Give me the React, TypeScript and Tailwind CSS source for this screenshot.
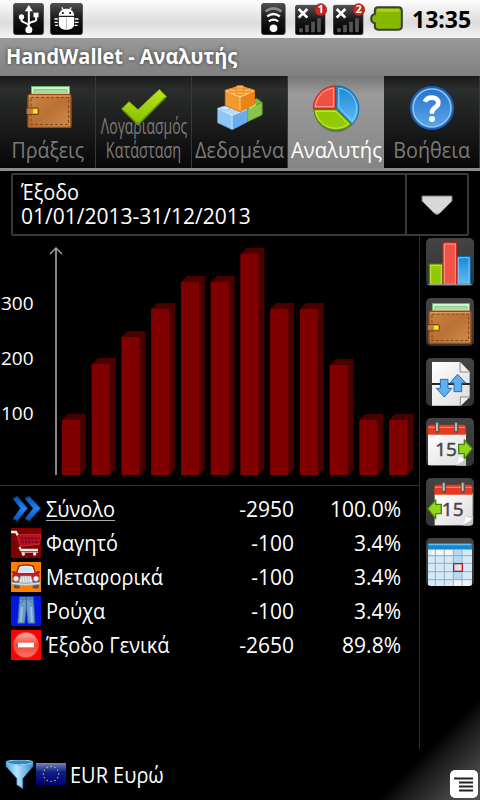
import type { ReactNode } from "react";

const months = [55, 111, 138, 166, 193, 193, 221, 166, 166, 110, 55, 55];

function Wallet({ className }: { className?: string }) {
  return (
    <svg viewBox="0 0 46 42" className={className}>
      <rect x="5.5" y="0.5" width="38" height="14" fill="#d5f3cd" stroke="#63b56a" />
      <path d="M8 7V3.5H41V7" fill="#a5dba0" stroke="#86c98a" />
      <rect x="2" y="8.5" width="43" height="33" rx="1.5" fill="url(#leather)" stroke="#9a4a17" strokeWidth="1.4" />
      <rect x="5" y="11.5" width="37.5" height="27" fill="none" stroke="#85491d" strokeWidth="1.1" strokeDasharray="3 2" />
      <path d="M3 10h41" stroke="#e3a768" strokeWidth="1" />
      <rect x="0.6" y="22" width="12" height="6.5" rx="1.5" fill="#c27e42" stroke="#7c3b12" />
      <rect x="7" y="23" width="4.5" height="4.5" fill="#ffed16" stroke="#d6a500" strokeWidth=".6" />
    </svg>
  );
}

function Check() {
  return (
    <svg viewBox="0 0 46 38" className="h-[38px] w-[46px]">
      <path d="M.7 20 8 12.7l9 8L38.3.5l7.2 7.2L17 36.3Z" fill="url(#lime)" stroke="#8fb512" strokeWidth=".8" strokeLinejoin="round" />
      <path d="m1.5 20.5 15.5 15L44.8 8" fill="none" stroke="#5c9300" strokeWidth="1.2" />
    </svg>
  );
}

function Bricks() {
  return (
    <svg viewBox="82 26 138 136" className="h-[45px] w-[46px]">
      <path d="m152 88 50-22 16 12v38l-46 22-20-10Z" fill="#79b83d" />
      <path d="m172 100 46-22v38l-46 22Z" fill="#8ac44c" stroke="#4f9124" strokeWidth="2" />
      <path d="m178 96 20-12" stroke="#b8e07f" strokeWidth="8" />
      <path d="m83 96 44-12 45 16v38l-45 23-44-21Z" fill="#8fc6f5" stroke="#4c8fd0" strokeWidth="2" />
      <path d="m83 96 44 22 45-18-45-16Z" fill="#b9dcfa" />
      <path d="m127 118 45-18v38l-45 23Z" fill="#68aeec" />
      <path d="M127 118v41M85 97l42 21 44-18" stroke="#e0f1ff" strokeWidth="2.5" fill="none" />
      <ellipse cx="106" cy="96" rx="14" ry="6" fill="#d6ebfd" stroke="#69a7e0" strokeWidth="2" />
      <path d="m106 42 45-14 44 14v42l-44 23-45-19Z" fill="#f29a2e" stroke="#c9620b" strokeWidth="2" />
      <path d="m106 42 45 21 44-21-44-14Z" fill="#ffbf65" />
      <path d="m151 63 44-21v42l-44 23Z" fill="#eb8318" />
      <path d="M151 63v41M108 43l43 20 43-20" stroke="#ffd9a0" strokeWidth="2.5" fill="none" />
      <g fill="#ffad43" stroke="#d2740e" strokeWidth="2">
        <ellipse cx="151" cy="33" rx="13" ry="6" />
        <ellipse cx="129" cy="42" rx="13" ry="6" />
        <ellipse cx="173" cy="42" rx="13" ry="6" />
        <ellipse cx="151" cy="51" rx="13" ry="6" />
      </g>
    </svg>
  );
}

function Pie() {
  return (
    <svg viewBox="368 24 142 144" className="h-[48px] w-[47px]">
      <ellipse cx="438" cy="100" rx="66" ry="66" fill="#333" opacity=".35" />
      <path d="M436 95V26a68 68 0 0 0-67 69Z" fill="#f05040" stroke="#c3261c" strokeWidth="3" />
      <path d="M430 89V33a62 62 0 0 0-55 56Z" fill="none" stroke="#ffa79d" strokeWidth="3" />
      <path d="M440 94V26a68 68 0 0 1 47 116Z" fill="url(#sky)" stroke="#116bab" strokeWidth="3" />
      <path d="M446 91V33a61 61 0 0 1 40 99Z" fill="none" stroke="#8ed0ff" strokeWidth="3" />
      <path d="M370 97h68l46 45a68 68 0 0 1-114-45Z" fill="#93c900" stroke="#4a8400" strokeWidth="3" />
      <path d="M376 103h60l39 38a62 62 0 0 1-99-38Z" fill="none" stroke="#c5ee51" strokeWidth="3" />
    </svg>
  );
}

function Help() {
  return (
    <svg viewBox="658 25 138 138" className="size-[46px]">
      <circle cx="727" cy="94" r="65" fill="#1d62b5" stroke="#1b59a8" strokeWidth="3" />
      <circle cx="727" cy="94" r="57" fill="url(#help)" stroke="#8fc3f5" strokeWidth="5" />
      <path d="M706 75c3-9 12-12 21-12 12 0 19 6 19 15 0 15-19 15-19 29v4" fill="none" stroke="#fff" strokeWidth="14" />
      <circle cx="727" cy="127" r="9" fill="#fff" />
    </svg>
  );
}

function Defs() {
  return (
    <svg className="absolute size-0">
      <defs>
        <linearGradient id="leather" x2="1" y2="1">
          <stop stopColor="#c98546" />
          <stop offset=".5" stopColor="#bb7133" />
          <stop offset="1" stopColor="#cd8e50" />
        </linearGradient>
        <linearGradient id="lime" x2="0" y2="1">
          <stop stopColor="#bfe51a" />
          <stop offset="1" stopColor="#82bd00" />
        </linearGradient>
        <linearGradient id="sky" x2="0" y2="1">
          <stop stopColor="#1587d3" />
          <stop offset="1" stopColor="#65bdf3" />
        </linearGradient>
        <linearGradient id="help" x2="0" y2="1">
          <stop stopColor="#2674ca" />
          <stop offset="1" stopColor="#5ba6ea" />
        </linearGradient>
        <linearGradient id="badge" x2="0" y2="1">
          <stop stopColor="#505050" />
          <stop offset=".5" stopColor="#161616" />
          <stop offset="1" stopColor="#000" />
        </linearGradient>
        <linearGradient id="redball" x2="0" y2="1">
          <stop stopColor="#ffb3a8" />
          <stop offset=".5" stopColor="#ed4638" />
          <stop offset="1" stopColor="#ff7465" />
        </linearGradient>
        <linearGradient id="chevron" x2="0" y2="1">
          <stop stopColor="#0b4cb0" />
          <stop offset=".5" stopColor="#2183ef" />
          <stop offset="1" stopColor="#0a4fb8" />
        </linearGradient>
        <linearGradient id="funnel">
          <stop stopColor="#4fa7e0" />
          <stop offset=".4" stopColor="#b8e4fb" />
          <stop offset="1" stopColor="#3a8fca" />
        </linearGradient>
        <linearGradient id="flag" x2="0" y2="1">
          <stop stopColor="#7a84bd" />
          <stop offset=".4" stopColor="#10208a" />
          <stop offset="1" stopColor="#000070" />
        </linearGradient>
        <linearGradient id="paper" x2="1" y2="1">
          <stop stopColor="#fff" />
          <stop offset="1" stopColor="#dcdcdc" />
        </linearGradient>
      </defs>
    </svg>
  );
}

function Signal({ sim }: { sim: string }) {
  return (
    <svg viewBox="165 8 96 96" className="h-8 w-8">
      <rect x="166" y="15" width="89" height="88" rx="6" fill="url(#badge)" stroke="#333" strokeWidth="2" />
      <path d="m176 26 26 26m0-26-26 26" stroke="#fff" strokeWidth="8" />
      <path d="M183 96v-12m18 12V74m18 22V64m18 32V54" stroke="#555" strokeWidth="11" />
      <circle cx="242" cy="28" r="18" fill="#c12b20" stroke="#8d1710" strokeWidth="2" />
      <text x="242" y="39" textAnchor="middle" fontSize="31" fontWeight="700" fill="#fff">{sim}</text>
    </svg>
  );
}

function StatusBar() {
  return (
    <header className="flex h-[38px] items-start bg-linear-to-b from-[#fdfdfd] via-[#dcdcdc] via-60% to-[#f4f4f4] pt-[3px] pl-[13px]">
      <svg viewBox="38 8 92 96" className="h-8 w-[31px]">
        <rect x="39" y="9" width="90" height="94" rx="8" fill="url(#badge)" stroke="#333" strokeWidth="2" />
        <path d="M85 88V24M63 50v10c0 8 22 6 22 18M107 44v14c0 8-22 5-22 14" fill="none" stroke="#fff" strokeWidth="6" />
        <path d="m73 33 12-19 12 19Z" fill="#fff" />
        <circle cx="63" cy="50" r="8" fill="#fff" />
        <path d="M99 37h15v14H99Z" fill="#fff" />
        <circle cx="85" cy="88" r="10.500" fill="#fff" />
      </svg>
      <svg viewBox="149 8 98 96" className="ml-1.5 h-8 w-[33px]">
        <rect x="150" y="9" width="96" height="94" rx="8" fill="url(#badge)" stroke="#333" strokeWidth="2" />
        <path d="M175 46c0-28 46-28 46 0ZM175 50h46v22c0 22-46 22-46 0Z" fill="#fff" />
        <path d="m184 21 5 9m23-9-5 9M162 56h10m-10 10h10m-8 9h9m50-19h11m-11 10h11m-12 9h9" stroke="#fff" strokeWidth="4" />
        <path d="M198 52v34" stroke="#bbb" strokeWidth="3" />
        <path d="M187 35v6m22-6v6" stroke="#222" strokeWidth="5" />
      </svg>
      <svg viewBox="62 8 74 96" className="ml-[178px] h-8 w-[25px]">
        <rect x="63" y="9" width="71" height="94" rx="8" fill="url(#badge)" stroke="#333" strokeWidth="2" />
        <circle cx="99" cy="84" r="11.500" fill="#fff" />
        <path d="M85 63q14-10 28 0M80 48q19-14 38 0" fill="none" stroke="#fff" strokeWidth="7" />
        <path d="M75 33q24-18 48 0" fill="none" stroke="#8a8a8a" strokeWidth="8" />
      </svg>
      <div className="ml-[9px] flex gap-[6px]">
        <Signal sim="1" />
        <Signal sim="2" />
      </div>
      <svg viewBox="392 18 98 75" className="mt-[3px] ml-[5px] h-[25px] w-[33px]">
        <path d="M416 22h61q10 0 10 10v46q0 11-10 11h-61q-10 0-10-11v-8q-11-3-11-14t11-14v-10q0-10 10-10Z" fill="#86b800" stroke="#3c3c3c" strokeWidth="6" />
        <path d="M414 31h66" stroke="#a6d51b" strokeWidth="8" />
      </svg>
      <span className="ml-[9px] text-[23px] leading-[33px] font-bold text-black">13:35</span>
    </header>
  );
}

type TabProps = { icon: ReactNode; active?: boolean; children: ReactNode };

function Tab({ icon, active, children }: TabProps) {
  return (
    <button
      className={
        active
          ? "grid h-[92px] w-24 grid-cols-[96px] bg-linear-to-b from-[#777] via-[#9b9b9b] via-20% to-[#858585] text-white"
          : "grid h-[92px] w-24 grid-cols-[96px] border-r border-[#383838] bg-linear-to-b from-[#191919] via-[#2c2e2d] via-15% to-[#080808] text-[#7b7b7b]"
      }
    >
      <span className="flex justify-center pt-[9px] [grid-area:1/1]">{icon}</span>
      <span className="flex flex-col items-center justify-end pb-[7px] text-[22px] leading-6 whitespace-nowrap [grid-area:1/1]">
        {children}
      </span>
    </button>
  );
}

function Tabs() {
  return (
    <nav className="flex h-[95px] border-b-[3px] border-[#8a8d8a] bg-[#8a8d8a]">
      <Tab icon={<Wallet className="mt-px ml-0.5 h-[42px] w-[46px]" />}>
        <span className="scale-x-[.89]">Πράξεις</span>
      </Tab>
      <Tab icon={<span className="mt-1"><Check /></span>}>
        <span className="scale-x-[.635]">Λογαριασμός</span>
        <span className="scale-x-[.655]">Κατάσταση</span>
      </Tab>
      <Tab icon={<Bricks />}>
        <span className="scale-x-90">Δεδομένα</span>
      </Tab>
      <Tab icon={<Pie />} active>
        <span className="scale-x-[.92]">Αναλυτής</span>
      </Tab>
      <Tab icon={<Help />}>
        <span className="scale-x-90">Βοήθεια</span>
      </Tab>
    </nav>
  );
}

function Chart() {
  return (
    <svg viewBox="0 236 419 249" className="h-[249px] w-[419px]">
      <g fill="#fff" fontSize="19">
        <text x="1" y="310">300</text>
        <text x="1" y="365">200</text>
        <text x="1" y="420">100</text>
      </g>
      <path d="M56 475V249" stroke="#888" strokeWidth="2" />
      <path d="m50 254 6-6 6 6" fill="none" stroke="#aaa" strokeWidth="1.3" />
      {months.map((h, i) => {
        const x = 62 + i * 29.75;
        const y = 475 - h;
        return (
          <g key={i}>
            <path d={`M${x} ${y}l6-6h17.800V469l-5.800 6H${x}Z`} fill="#4b0000" />
            <rect x={x} y={y} width="18" height={h} fill="#800000" />
          </g>
        );
      })}
    </svg>
  );
}

function Cart() {
  return (
    <svg viewBox="33 129 90 90" className="size-[30px]">
      <path d="M33 129h90v90H33Z" fill="#800000" />
      <path d="M50 149h72l-4 29-57 6Z" fill="#b01020" stroke="#c82b35" strokeWidth="3" />
      <path d="M64 160h56M66 171h53" stroke="#68000a" strokeWidth="4" strokeDasharray="5 5" />
      <path d="M33 141h15l5 10M58 186l5 9h51" fill="none" stroke="#eee" strokeWidth="7" />
      <path d="M63 202h52" stroke="#d3b4b4" strokeWidth="3" />
      <circle cx="70" cy="207" r="5" fill="#eee" />
      <circle cx="104" cy="207" r="5" fill="#eee" />
    </svg>
  );
}

function Car() {
  return (
    <svg viewBox="33 231 90 90" className="size-[30px]">
      <path d="M33 231h90v90H33Z" fill="#ff8000" />
      <path d="M42 296h18v12q-9 5-18 0Zm56 0h18v12q-9 5-18 0Z" fill="#555" />
      <path d="m50 261 6-19q22-6 44 0l6 19 11 9v24H39v-24Z" fill="#c31c22" stroke="#7b1014" strokeWidth="2" />
      <path d="m54 262 6-16q18-5 36 0l6 16Z" fill="#c5e7f8" stroke="#fff" strokeWidth="3" />
      <path d="M37 262h9m64 0h9" stroke="#9d1014" strokeWidth="7" />
      <path d="M62 273h31l6 21H56Z" fill="#e8eef1" stroke="#8999a4" strokeWidth="2" />
      <path d="M67 275v17m7-17v17m7-17v17m7-17v17" stroke="#9daab2" strokeWidth="2" />
      <circle cx="48" cy="281" r="8" fill="#f1f5f8" stroke="#999" strokeWidth="2" />
      <circle cx="108" cy="281" r="8" fill="#f1f5f8" stroke="#999" strokeWidth="2" />
      <path d="M35 291q43 8 86 0v7q-43 8-86 0Z" fill="#d7e0e4" stroke="#8c9ba0" strokeWidth="2" />
    </svg>
  );
}

function Jeans() {
  return (
    <svg viewBox="33 333 90 90" className="size-[30px]">
      <path d="M33 333h90v90H33Z" fill="#0018de" />
      <path d="M59 336h41l5 79H84l-5-48-5 48H53Z" fill="#6d9bc7" stroke="#34608e" strokeWidth="2" />
      <path d="M59 342h42M79 336v31" stroke="#34608e" strokeWidth="3" />
      <path d="m66 366-4 45m31-45 3 45" stroke="#97c0e2" strokeWidth="6" />
      <path d="m60 355 11-9m29 9-12-9" stroke="#34608e" strokeWidth="2" />
    </svg>
  );
}

function Expense() {
  return (
    <svg viewBox="33 435 90 90" className="size-[30px]">
      <path d="M33 435h90v90H33Z" fill="red" />
      <circle cx="78" cy="480" r="38" fill="url(#redball)" stroke="#d8382c" strokeWidth="2" />
      <rect x="54" y="473" width="48" height="14" fill="#fff" />
    </svg>
  );
}

function Arrows() {
  return (
    <svg viewBox="33 24 90 90" className="size-[30px]">
      <path d="m39 38 13-7 31 36-31 38-13-7 22-31Zm36 0 13-7 34 36-34 38-13-7 24-31Z" fill="url(#chevron)" stroke="#0a3f91" strokeWidth="2" />
    </svg>
  );
}

const rows = [
  { icon: <Arrows />, name: "Σύνολο", amount: "-2950", share: "100.0%", total: true },
  { icon: <Cart />, name: "Φαγητό", amount: "-100", share: "3.4%" },
  { icon: <Car />, name: "Μεταφορικά", amount: "-100", share: "3.4%" },
  { icon: <Jeans />, name: "Ρούχα", amount: "-100", share: "3.4%" },
  { icon: <Expense />, name: "Έξοδο Γενικά", amount: "-2650", share: "89.8%" },
];

function Calendar({ back }: { back?: boolean }) {
  return (
    <svg viewBox="0 0 144 144" className="size-12">
      <g transform={back ? "translate(20 0)" : undefined}>
        <path d="M6 46h114v96H6Z" fill="url(#paper)" />
        <path d="M5 28q0-8 8-8h98q8 0 8 8v22H5Z" fill="#e63b20" />
        <path d="M7 28h110" stroke="#ff7a5c" strokeWidth="4" />
        <path d="M34 17v22m57-22v22" stroke="#545454" strokeWidth="13" strokeLinecap="round" />
        <path d="M33 17v20m57-20v20" stroke="#bbb" strokeWidth="6" strokeLinecap="round" />
        <text x="60" y="114" textAnchor="middle" fontSize="57" fill="#444" stroke="#444" strokeWidth="1.5">15</text>
        <path d="M92 143q8-25 28-31v31Z" fill="#c4c4c4" />
        <path d="M84 141q17-8 13-27 12 9 23 2-5 18-36 25Z" fill="#fff" stroke="#ccc" strokeWidth="1" />
      </g>
      <path
        d={back ? "M5 92 29 66v13h17v28H29v15Z" : "M139 92 115 66v13H98v28h17v15Z"}
        fill="#91d51e" stroke="#468406" strokeWidth="4" strokeLinejoin="round"
      />
    </svg>
  );
}

function SideButton({ children }: { children: ReactNode }) {
  return (
    <button className="flex size-12 items-center justify-center overflow-hidden rounded-[5px] bg-linear-to-b from-[#444] to-[#333]">
      {children}
    </button>
  );
}

function SideBar() {
  return (
    <aside className="flex h-[513px] w-[61px] flex-col gap-3 border-l border-[#303030] pt-0.5 pl-1.5">
      <SideButton>
        <svg viewBox="0 0 144 144" className="size-12">
          <path d="M10 78h40v60H10Z" fill="#94c900" stroke="#4b8300" strokeWidth="3" />
          <path d="M14 82h32v56H14Z" fill="none" stroke="#c0e94d" strokeWidth="3" />
          <path d="M93 55h40v83H93Z" fill="url(#sky)" stroke="#0a69ad" strokeWidth="3" />
          <path d="M97 59h32v79H97Z" fill="none" stroke="#79c8f5" strokeWidth="3" />
          <path d="M51 14h41v124H51Z" fill="#ef5546" stroke="#c42218" strokeWidth="3" />
          <path d="M55 18h33v120H55Z" fill="none" stroke="#ff988b" strokeWidth="3" />
          <path d="M4 140h136" stroke="#999" strokeWidth="3" />
        </svg>
      </SideButton>
      <SideButton>
        <Wallet className="mt-0.5 -ml-px h-[41px] w-[45px]" />
      </SideButton>
      <SideButton>
        <svg viewBox="0 0 144 144" className="size-12">
          <path d="M18 12h84l29 29v34H18Zm0 69h113v36l-26 26H18Z" fill="url(#paper)" />
          <path d="M102 12v30h28M131 117h-28v26" fill="#eee" stroke="#888" strokeWidth="3" />
          <path d="M18 78h113" stroke="#222" strokeWidth="5" />
          <path d="M43 64h23v27h12l-23 26-24-26h12ZM84 101h23V75h12L95 49 72 75h12Z" fill="#62aef0" stroke="#226db9" strokeWidth="3" strokeLinejoin="round" />
        </svg>
      </SideButton>
      <SideButton><Calendar /></SideButton>
      <SideButton><Calendar back /></SideButton>
      <SideButton>
        <svg viewBox="0 0 144 144" className="size-12">
          <path d="M6 34h132v111H6Z" fill="#d5e9f7" />
          <path d="M16 36h66v16H16Zm67 90h48v18H83Z" fill="#f5f5f5" />
          <path d="M83 36h24v88H83Z" fill="#b4d9f1" />
          <path d="M6 53h132M6 76h132M6 101h132M6 125h132M28 34v110M55 34v110M82 34v110M108 34v110" stroke="#8cacc4" strokeWidth="3" />
          <path d="M5 22q0-7 7-7h120q7 0 7 7v12H5Z" fill="#1687cf" />
          <path d="M8 20h128" stroke="#63bcf2" strokeWidth="4" />
          <rect x="83" y="77" width="26" height="23" fill="#d7e7f3" stroke="#c81422" strokeWidth="4" />
        </svg>
      </SideButton>
    </aside>
  );
}

function Footer() {
  return (
    <footer className="flex h-[51px] items-end justify-between">
      <div className="flex h-[51px] items-center pl-[5px]">
        <svg viewBox="14 180 86 88" className="h-[29px] w-[29px]">
          <path d="M16 188q41 14 82 0v11l-31 37v31l-18-12v-19L16 199Z" fill="url(#funnel)" stroke="#2c7fb9" strokeWidth="2" />
          <ellipse cx="57" cy="187" rx="41" ry="7" fill="#2e88c4" stroke="#9bd6f8" strokeWidth="3" />
        </svg>
        <svg viewBox="0 0 30 22" className="mb-0.5 ml-0.5 h-[22px] w-[30px]">
          <rect width="30" height="22" fill="url(#flag)" />
          <g fill="#d6c22c">
            {Array.from({ length: 12 }, (_, i) => (
              <circle key={i} cx={15 + 7.7 * Math.sin((i * Math.PI) / 6)} cy={11 - 7.5 * Math.cos((i * Math.PI) / 6)} r=".75" />
            ))}
          </g>
        </svg>
        <span className="mt-px ml-1 origin-left scale-x-95 text-[21px] leading-[51px]">EUR Ευρώ</span>
      </div>
      <button className="mr-0.5 mb-0.5 size-7 rounded-[5px] bg-white">
        <svg viewBox="0 0 28 28" className="size-7">
          <path d="M4 8.500h19M9 12.500h14M9 16.500h14M9 20.500h14" stroke="#222" strokeWidth="1.8" />
        </svg>
      </button>
    </footer>
  );
}

export default function App() {
  return (
    <main className="flex h-[800px] w-[480px] flex-col overflow-hidden bg-black bg-[linear-gradient(135deg,#000_92%,#1c1c1c_94%,#444_97.5%,#505050_100%)] font-['Open_Sans','Noto_Sans',sans-serif] text-white">
      <Defs />
      <StatusBar />
      <div className="h-[38px] bg-linear-to-b from-[#999] to-[#808080] pl-1.5">
        <h1 className="origin-left scale-x-95 text-[21px] leading-[37px] font-bold whitespace-nowrap [text-shadow:0_0_4px_#333]">
          HandWallet - Αναλυτής
        </h1>
      </div>
      <Tabs />
      <div className="flex h-[65px] pt-[2px] pl-[11px]">
        <button className="flex h-[63px] w-[458px] rounded-[2px] border-2 border-[#383838]">
          <span className="flex h-full w-[394px] flex-col items-start border-r-2 border-[#383838] pt-[5px] pl-2 text-[21px] leading-6">
            <span className="origin-left scale-x-95">Έξοδο</span>
            <span>01/01/2013-31/12/2013</span>
          </span>
          <svg viewBox="0 0 34 22" className="mt-[19px] ml-[13px] h-[22px] w-[34px]">
            <path d="M2 2h30v5L20 19q-3 3-6 0L2 7Z" fill="#d8d8d8" stroke="#777" />
          </svg>
        </button>
      </div>
      <div className="flex h-[513px]">
        <section className="w-[419px]">
          <Chart />
          <ul className="border-t border-[#303030] pt-[6px]">
            {rows.map((row) => (
              <li key={row.name} className="flex h-[34px] items-center pl-[11px] text-[21px] leading-[34px] whitespace-nowrap">
                {row.icon}
                <span className="ml-[5px] w-[150px] origin-left scale-x-95">
                  <span className={row.total ? "underline decoration-[#aaa] decoration-1 underline-offset-[3px]" : ""}>{row.name}</span>
                </span>
                <span className="w-[98px] text-right">{row.amount}</span>
                <span className="w-[107px] text-right">{row.share}</span>
              </li>
            ))}
          </ul>
        </section>
        <SideBar />
      </div>
      <Footer />
    </main>
  );
}
